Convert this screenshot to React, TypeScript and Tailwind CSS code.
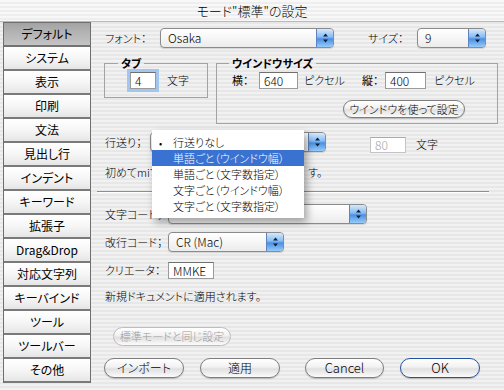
import type { ReactNode } from 'react'

const SIDEBAR = [
  'デフォルト',
  'システム',
  '表示',
  '印刷',
  '文法',
  '見出し行',
  'インデント',
  'キーワード',
  '拡張子',
  'Drag&Drop',
  '対応文字列',
  'キーバインド',
  'ツール',
  'ツールバー',
  'その他',
]

const MENU = ['行送りなし', '単語ごと（ウインドウ幅）', '単語ごと（文字数指定）', '文字ごと（ウインドウ幅）', '文字ごと（文字数指定）']

function Stepper() {
  return (
    <div className="flex h-full w-[17px] shrink-0 items-center justify-center rounded-r-[3px] border-l border-[#5d83bd] bg-[image:linear-gradient(180deg,#d6e9fc_0%,#86bbf2_45%,#4b8fe3_55%,#95cbfb_100%)]">
      <svg width="7" height="12" viewBox="0 0 7 12" aria-hidden>
        <path d="M3.5 1.5 L6 4.5 H1 Z" fill="#10203a" />
        <path d="M3.5 10.5 L6 7.5 H1 Z" fill="#10203a" />
      </svg>
    </div>
  )
}

function Popup({ className, children }: { className: string; children?: ReactNode }) {
  return (
    <div className={`flex h-[20px] shrink-0 overflow-hidden rounded-[4px] border border-[#8b8b8b] bg-[image:linear-gradient(180deg,#ffffff_0%,#f6f6f6_50%,#ebebeb_100%)] shadow-[0_1px_1px_rgba(0,0,0,0.12)] ${className}`}>
      <span className="flex flex-1 items-center pl-[7px] text-[12px]">{children}</span>
      <Stepper />
    </div>
  )
}

function Field({ className, children }: { className: string; children?: ReactNode }) {
  return (
    <div className={`flex shrink-0 items-center border border-[#9a9a9a] border-t-[#6f6f6f] bg-white pl-[4px] text-[12px] ${className}`}>
      {children}
    </div>
  )
}

function Pill({ className, children }: { className: string; children: ReactNode }) {
  return (
    <div className={`flex shrink-0 items-center justify-center rounded-full border border-[#7d7d7d] bg-[image:linear-gradient(180deg,#ffffff_0%,#f1f1f1_45%,#e0e0e0_55%,#fbfbfb_100%)] shadow-[0_1px_1px_rgba(0,0,0,0.2)] ${className}`}>
      {children}
    </div>
  )
}

export default function App() {
  return (
    <div className="flex h-[390px] w-[504px] flex-col overflow-hidden bg-[image:repeating-linear-gradient(180deg,#f1f1f1_0px,#f1f1f1_2px,#e7e7e7_2px,#e7e7e7_4px)] font-['Noto_Sans_CJK_JP',sans-serif] font-light text-black [font-feature-settings:'palt']">
      <div className="flex h-[22px] shrink-0 items-center justify-center border-b border-[#b9b9b9] bg-[image:repeating-linear-gradient(180deg,#f8f8f8_0px,#f8f8f8_2px,#eeeeee_2px,#eeeeee_4px)] text-[13px]">
        モード"標準"の設定
      </div>

      <div className="flex flex-1">
        <nav className="ml-[3px] flex w-[88px] shrink-0 flex-col self-start border-x border-t border-[#6f6f6f]">
          {SIDEBAR.map((label, i) => (
            <div
              key={label}
              className={
                i === 0
                  ? 'flex h-[24px] items-center justify-center border-b-2 border-[#727272] bg-[image:linear-gradient(180deg,#a3a3a3_0%,#b4b4b4_45%,#c3c3c3_100%)] text-[12px] font-normal'
                  : 'flex h-[24px] items-center justify-center border-b-2 border-[#7a7a7a] bg-[image:linear-gradient(180deg,#ffffff_0%,#f6f6f6_50%,#e6e6e6_100%)] text-[12px] font-normal'
              }
            >
              {label}
            </div>
          ))}
        </nav>

        <div className="relative flex min-w-0 flex-1 flex-col pl-[13px] text-[11px]">
          <div className="mt-[6px] flex h-[20px] items-center">
            <span className="w-[56px] pl-px">フォント：</span>
            <Popup className="w-[174px]">Osaka</Popup>
            <span className="ml-[34px] w-[49px]">サイズ：</span>
            <Popup className="w-[69px]">9</Popup>
          </div>

          <div className="mt-[8px] flex items-start gap-[8px]">
            <fieldset className="h-[42px] w-[104px] border border-[#a3a3a3]">
              <legend className="ml-[13px] px-[3px] text-[11px] font-bold leading-[14px]">タブ</legend>
              <div className="mt-[2px] flex items-center pl-[25px]">
                <Field className="h-[17px] w-[26px] shadow-[0_0_0_3px_#a3c6ee]">4</Field>
                <span className="ml-[11px]">文字</span>
              </div>
            </fieldset>
            <fieldset className="h-[68px] w-[282px] border border-[#a3a3a3]">
              <legend className="ml-[12px] px-[3px] text-[11px] font-bold leading-[14px]">ウインドウサイズ</legend>
              <div className="mt-[2px] flex h-[17px] items-center pl-[15px]">
                <span className="w-[27px] font-normal">横：</span>
                <Field className="h-[17px] w-[39px]">640</Field>
                <span className="ml-[6px] w-[58px]">ピクセル</span>
                <span className="w-[23px] font-normal">縦：</span>
                <Field className="h-[17px] w-[41px]">400</Field>
                <span className="ml-[8px]">ピクセル</span>
              </div>
              <div className="mt-[11px] flex justify-end pr-[32px]">
                <Pill className="h-[18px] w-[122px]">ウインドウを使って設定</Pill>
              </div>
            </fieldset>
          </div>

          <div className="mt-[8px] flex h-[20px] items-start">
            <span className="flex h-[20px] w-[46px] items-center pl-px">行送り；</span>
            <Popup className="w-[176px]" />
            <Field className="ml-[44px] mt-[5px] h-[16px] w-[36px] border-[#c4c4c4] border-t-[#a9a9a9] text-[#a3a3a3]">80</Field>
            <span className="ml-[10px] flex h-[20px] items-center pt-[5px]">文字</span>
          </div>

          <div className="mt-[12px] flex h-[16px] items-center pl-px">
            <span className="w-[203px] shrink-0">初めてmiで</span>
            <span>す。</span>
          </div>

          <div className="ml-[-7px] mt-[11px] h-[2px] w-[392px] border-t border-b border-t-[#8e8e8e] border-b-white" />

          <div className="mt-[11px] flex h-[20px] items-center">
            <span className="w-[64px] pl-px">文字コード；</span>
            <Popup className="w-[199px]" />
          </div>

          <div className="mt-[8px] flex h-[20px] items-center">
            <span className="w-[64px] pl-px">改行コード；</span>
            <Popup className="w-[116px]">CR (Mac)</Popup>
          </div>

          <div className="mt-[10px] flex h-[17px] items-center">
            <span className="w-[64px] pl-px">クリエータ：</span>
            <Field className="h-[17px] w-[46px]">MMKE</Field>
          </div>

          <div className="mt-[9px] flex h-[16px] items-center pl-px">新規ドキュメントに適用されます。</div>

          <div className="ml-[9px] mt-[23px] flex">
            <Pill className="h-[19px] w-[118px] border-[#bdbdbd] text-[#9b9b9b] shadow-none">標準モードと同じ設定</Pill>
          </div>

          <div className="mt-[12px] flex h-[20px] items-center text-[12px]">
            <Pill className="h-[20px] w-[80px]">インポート</Pill>
            <Pill className="ml-[16px] h-[20px] w-[80px]">適用</Pill>
            <Pill className="ml-[25px] h-[20px] w-[79px] text-[13px]">Cancel</Pill>
            <Pill className="ml-[16px] h-[20px] w-[80px] border-[#24509e] bg-[image:linear-gradient(180deg,#bcdcfb_0%,#6aa8f0_45%,#2f78e0_55%,#8cc8ff_100%)] text-[13px]">OK</Pill>
          </div>

          <div className="absolute left-[61px] top-[108px] w-[152px] bg-white py-[4px] shadow-[3px_4px_8px_rgba(0,0,0,0.35)]">
            {MENU.map((item, i) => (
              <div
                key={item}
                className={
                  i === 1
                    ? 'relative flex h-[16px] items-center bg-[#3a72d2] pl-[21px] text-[11px] text-white'
                    : 'relative flex h-[16px] items-center pl-[21px] text-[11px]'
                }
              >
                {i === 0 ? <span className="absolute left-[7px] text-[10px]">•</span> : null}
                {item}
              </div>
            ))}
          </div>
        </div>
      </div>
    </div>
  )
}
